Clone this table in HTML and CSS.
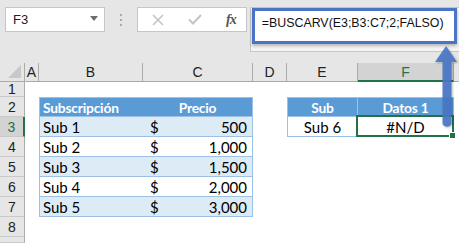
FILE: index.html
```html
<!DOCTYPE html>
<html lang="es">
<head>
<meta charset="utf-8">
<title>BUSCARV</title>
<link rel="stylesheet" href="styles.css">
</head>
<body>
<div class="app">
  <div class="toolbar">
    <div class="namebox">
      <span>F3</span>
      <svg class="caret" width="8" height="5" viewBox="0 0 8 5"><path d="M0 0h8L4 5z" fill="#6d6d6d"/></svg>
    </div>
    <svg class="grip" width="3" height="12" viewBox="0 0 3 12">
      <rect x="0" y="0" width="2" height="2" fill="#a6a6a6"/>
      <rect x="0" y="5" width="2" height="2" fill="#a6a6a6"/>
      <rect x="0" y="10" width="2" height="2" fill="#a6a6a6"/>
    </svg>
    <div class="fxbtns">
      <svg width="12" height="12" viewBox="0 0 12 12"><path d="M1 1l10 10M11 1L1 11" stroke="#c4c4c4" stroke-width="1.6"/></svg>
      <svg width="14" height="11" viewBox="0 0 14 11"><path d="M1 5.5l4 4L13 1" stroke="#c4c4c4" stroke-width="2" fill="none"/></svg>
      <span class="fx">fx</span>
    </div>
    <div class="formula">
      <div class="formula-hl">=BUSCARV(E3;B3:C7;2;FALSO)</div>
    </div>
  </div>

  <div class="sheet">
    <!-- column headers -->
    <div class="ch corner"><svg width="13" height="13" viewBox="0 0 13 13"><path d="M13 0v13H0z" fill="#c8c8c8"/></svg></div>
    <div class="ch">A</div>
    <div class="ch">B</div>
    <div class="ch">C</div>
    <div class="ch">D</div>
    <div class="ch">E</div>
    <div class="ch act">F</div>
    <div class="ch end"></div>

    <!-- row 1 -->
    <div class="rh r1">1</div>
    <div class="c"></div><div class="c"></div><div class="c"></div><div class="c"></div><div class="c"></div><div class="c"></div><div class="c"></div>

    <!-- row 2 -->
    <div class="rh">2</div>
    <div class="c"></div>
    <div class="c t th tl">Subscripción</div>
    <div class="c t th tr ctr">Precio</div>
    <div class="c"></div>
    <div class="c t th tl ctr sep">Sub</div>
    <div class="c t th tr ctr">Datos 1</div>
    <div class="c"></div>

    <!-- row 3 -->
    <div class="rh act">3</div>
    <div class="c"></div>
    <div class="c t odd tl">Sub 1</div>
    <div class="c t odd tr money"><span>$</span><span>500</span></div>
    <div class="c"></div>
    <div class="c t tl tr ctr">Sub 6</div>
    <div class="c t tr ctr sel">#N/D</div>
    <div class="c"></div>

    <!-- row 4 -->
    <div class="rh">4</div>
    <div class="c"></div>
    <div class="c t tl">Sub 2</div>
    <div class="c t tr money"><span>$</span><span>1,000</span></div>
    <div class="c"></div><div class="c"></div><div class="c"></div><div class="c"></div>

    <!-- row 5 -->
    <div class="rh">5</div>
    <div class="c"></div>
    <div class="c t odd tl">Sub 3</div>
    <div class="c t odd tr money"><span>$</span><span>1,500</span></div>
    <div class="c"></div><div class="c"></div><div class="c"></div><div class="c"></div>

    <!-- row 6 -->
    <div class="rh">6</div>
    <div class="c"></div>
    <div class="c t tl">Sub 4</div>
    <div class="c t tr money"><span>$</span><span>2,000</span></div>
    <div class="c"></div><div class="c"></div><div class="c"></div><div class="c"></div>

    <!-- row 7 -->
    <div class="rh">7</div>
    <div class="c"></div>
    <div class="c t odd tl">Sub 5</div>
    <div class="c t odd tr money"><span>$</span><span>3,000</span></div>
    <div class="c"></div><div class="c"></div><div class="c"></div><div class="c"></div>

    <!-- row 8 -->
    <div class="rh">8</div>
    <div class="c"></div><div class="c"></div><div class="c"></div><div class="c"></div><div class="c"></div><div class="c"></div><div class="c"></div>

    <!-- row 9 (cut off) -->
    <div class="rh"></div>
    <div class="c"></div><div class="c"></div><div class="c"></div><div class="c"></div><div class="c"></div><div class="c"></div><div class="c"></div>
  </div>

  <!-- pointer from the selected cell up to the formula -->
  <svg class="arrow" width="27" height="90" viewBox="0 0 27 90">
    <path d="M14 4L25 20H19.5V82a5 5 0 0 1-9 0V20H3z" fill="#4a77c7" fill-opacity="0.92"/>
  </svg>
</div>
</body>
</html>
```

FILE: styles.css
```css
html, body {
  margin: 0;
  padding: 0;
}

body {
  background: #e6e6e6;
  font-family: "Lato", "Liberation Sans", sans-serif;
  overflow: hidden;
}

.app {
  position: relative;
  width: 459px;
  height: 243px;
  overflow: hidden;
}

/* ---------- formula bar ---------- */
.toolbar {
  height: 63px;
  display: flex;
  align-items: flex-start;
  padding: 7px 0 0 5px;
  box-sizing: border-box;
}

.namebox {
  width: 101px;
  height: 25px;
  box-sizing: border-box;
  background: #fff;
  border: 1px solid #c6c6c6;
  display: flex;
  align-items: center;
  justify-content: space-between;
  padding: 0 6px 0 7px;
  font-family: "Liberation Sans", sans-serif;
  font-size: 13px;
  color: #222;
}

.caret {
  margin-top: -2px;
}

.grip {
  margin: 7px 0 0 15px;
}

.fxbtns {
  margin-left: 14px;
  width: 111px;
  height: 25px;
  box-sizing: border-box;
  background: #fff;
  border: 1px solid #c6c6c6;
  display: flex;
  align-items: center;
  justify-content: space-between;
  padding: 0 10px 0 14px;
}

.fx {
  font-family: "Liberation Serif", serif;
  font-style: italic;
  font-weight: bold;
  font-size: 14px;
  color: #555;
  letter-spacing: -1px;
}

.formula {
  margin-left: 3px;
  width: 212px;
  height: 45px;
  box-sizing: border-box;
  background: #f4f4f4;
  border: 1px solid #c6c6c6;
  border-right: none;
  padding: 0 0 0 1px;
}

.formula-hl {
  width: 205px;
  height: 36px;
  box-sizing: border-box;
  background: #fff;
  border: 3px solid #4a74c5;
  box-shadow: 0 2px 3px rgba(0, 0, 0, 0.25);
  padding: 5px 0 0 7px;
  font-family: "Liberation Sans", sans-serif;
  font-size: 12.4px;
  color: #111;
  white-space: nowrap;
}

/* ---------- worksheet grid ---------- */
.sheet {
  display: grid;
  grid-template-columns: 25px 14px 104px 110px 34px 71px 96px 5px;
  grid-template-rows: 19px 15px repeat(7, 20px) 6px;
  background: #fff;
}

.ch,
.rh {
  box-sizing: border-box;
  background: #e6e6e6;
  color: #222;
  font-size: 14px;
  text-align: center;
  font-family: "Liberation Sans", sans-serif;
}

.ch {
  line-height: 19px;
  border-right: 1px solid #ababab;
  border-bottom: 1px solid #ababab;
}

.ch.end {
  border-right: none;
}

.corner {
  display: flex;
  align-items: flex-end;
  justify-content: flex-end;
  padding: 0 3px 3px 0;
}

.ch.act {
  background: #d3d3d3;
  color: #217346;
  border-bottom: 2px solid #217346;
}

.rh {
  line-height: 20px;
  border-right: 1px solid #ababab;
  border-bottom: 1px solid #c9c9c9;
}

.rh.r1 {
  line-height: 14px;
}

.rh.act {
  background: #d3d3d3;
  color: #217346;
  border-right: 2px solid #217346;
}

.c {
  box-sizing: border-box;
  font-size: 15px;
  line-height: 21px;
  padding: 0 3px;
  white-space: nowrap;
  color: #000;
}

/* table styling */
.t {
  border-bottom: 1px solid #9bc2e6;
}

.th {
  background: #5b9bd5;
  color: #fff;
  font-weight: bold;
  font-size: 13.8px;
  letter-spacing: -0.2px;
  border-top: 1px solid #9bc2e6;
  line-height: 19px;
}

.tl {
  border-left: 1px solid #9bc2e6;
}

.tr {
  border-right: 1px solid #9bc2e6;
}

.sep {
  border-right: 1px solid #9bc2e6;
}

.odd {
  background: #ddebf7;
}

.ctr {
  text-align: center;
}

.money {
  display: flex;
  justify-content: space-between;
  padding: 0 5px 0 7px;
}

.sel {
  position: relative;
}

.sel::before {
  content: "";
  position: absolute;
  left: -2px;
  top: -2px;
  right: -1px;
  bottom: -1px;
  border: 2px solid #217346;
}

.sel::after {
  content: "";
  position: absolute;
  right: -3px;
  bottom: -3px;
  width: 5px;
  height: 5px;
  background: #217346;
  border: 1px solid #fff;
}

/* callout arrow */
.arrow {
  position: absolute;
  left: 432px;
  top: 42px;
  filter: drop-shadow(1px 1px 1px rgba(0, 0, 0, 0.3));
}
```
